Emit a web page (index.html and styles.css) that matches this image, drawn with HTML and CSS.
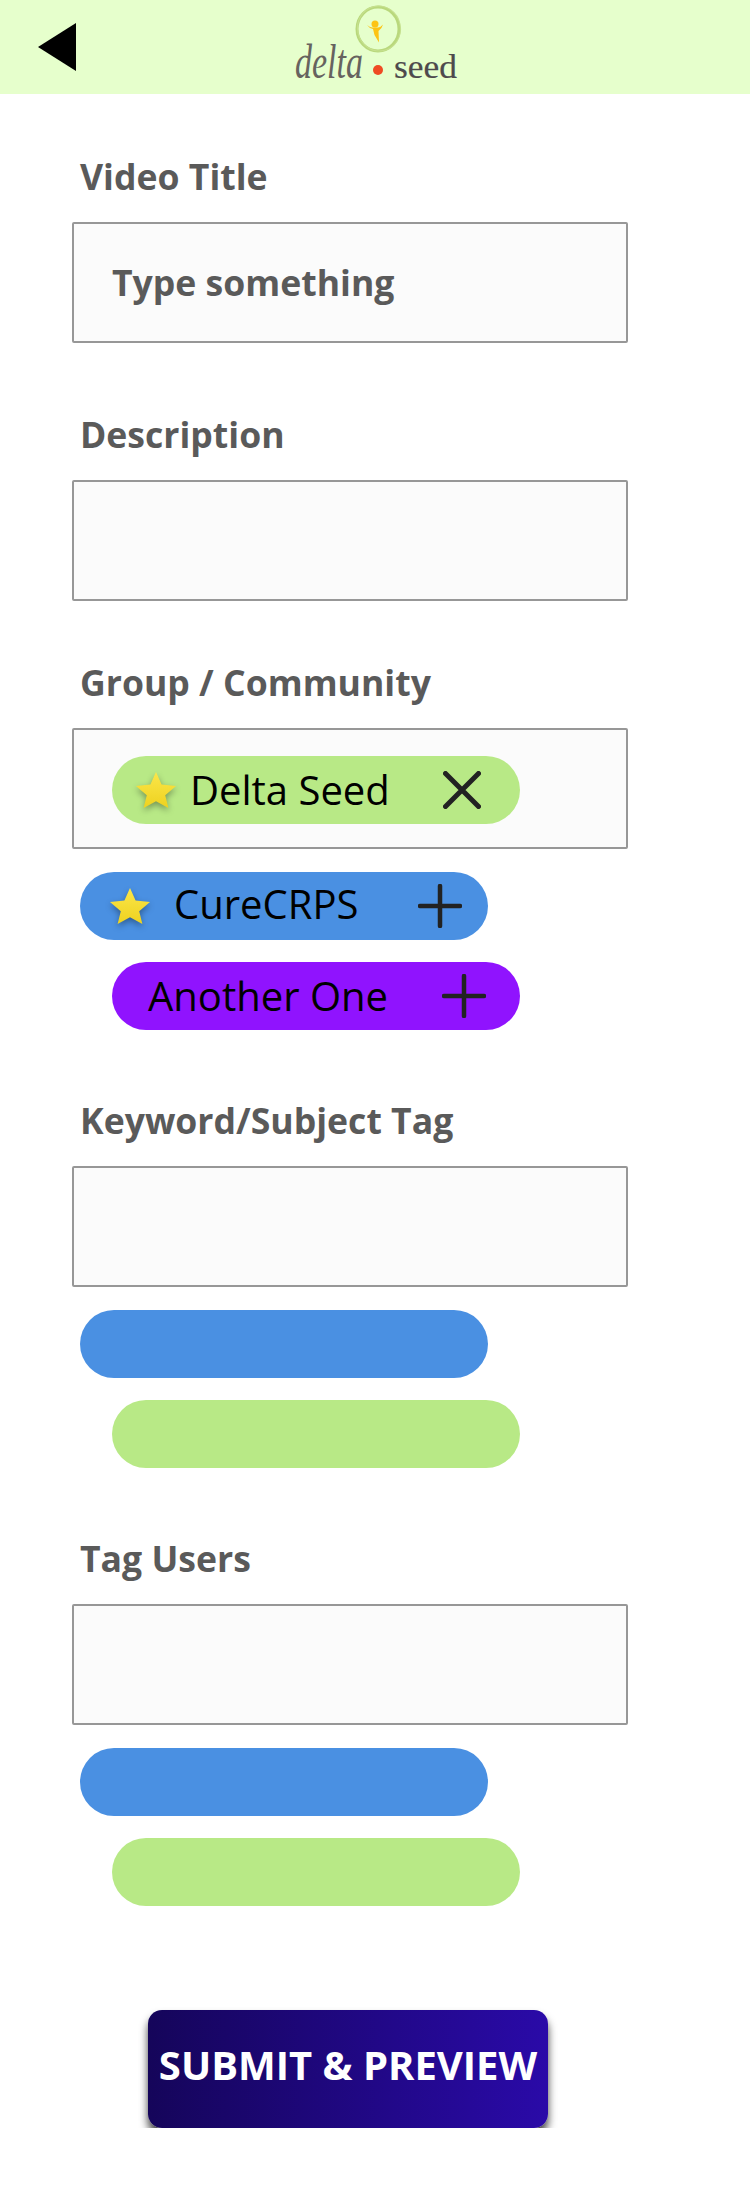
FILE: index.html
```html
<!DOCTYPE html>
<html lang="en">
  <head>
    <title>Upload Video</title>
    <link rel="stylesheet" href="styles.css">
  </head>
  <body>
    <svg class="defs" width="0" height="0">
      <defs>
        <linearGradient id="starFill" x1="0" y1="0" x2="0" y2="1">
          <stop offset="0" stop-color="#fbe64a" />
          <stop offset="1" stop-color="#eed21f" />
        </linearGradient>
        <symbol id="star" viewBox="0 0 40 36">
          <path fill="url(#starFill)" d="M20 0l5.6 12.6L40 13.9 29.200 23.200 32.400 36 20 29.300 7.600 36l3.200-12.800L0 13.900l14.400-1.300z" />
        </symbol>
        <symbol id="plus" viewBox="0 0 44 44">
          <path d="M22 2v40M2 22h40" fill="none" stroke="#222" stroke-width="4.500" stroke-linecap="round" />
        </symbol>
        <symbol id="cross" viewBox="0 0 38 38">
          <path d="M2.500 2.500l33 33M35.500 2.500l-33 33" fill="none" stroke="#222" stroke-width="5" stroke-linecap="round" />
        </symbol>
      </defs>
    </svg>

    <header class="topbar">
      <svg class="back" width="38" height="48" viewBox="0 0 38 48">
        <path d="M38 0v48L0 24z" />
      </svg>
      <svg class="logo" width="170" height="94" viewBox="0 0 170 94">
        <ellipse cx="88" cy="29" rx="21" ry="22" fill="none" stroke="#b9d87c" stroke-width="3" />
        <ellipse cx="89" cy="28.500" rx="21.500" ry="22.500" fill="none" stroke="#c6e08f" stroke-width="1" transform="rotate(-12 89 28.500)" />
        <circle cx="85" cy="24" r="3.500" fill="#fdc414" />
        <path fill="#fdc414" d="M77 25q4 3 6 2.500h5q3-.5 5-3-1 4-4.500 6.500l.5 11.500-4.500-7.500-1.500-6q-4-1-6-4z" />
        <circle cx="88" cy="70" r="5" fill="#ef4b23" />
        <text class="logo-script" x="5" y="41" transform="scale(1 1.900)" textLength="68" lengthAdjust="spacingAndGlyphs">delta</text>
        <text class="logo-seed" x="104" y="78" textLength="63" lengthAdjust="spacingAndGlyphs">seed</text>
      </svg>
    </header>

    <form class="upload-form" onsubmit="return false">
      <section class="field field-title">
        <label class="field-label">Video Title</label>
        <div class="box box-text">Type something</div>
      </section>

      <section class="field field-desc">
        <label class="field-label">Description</label>
        <div class="box"></div>
      </section>

      <section class="field field-group">
        <label class="field-label">Group / Community</label>
        <div class="box box-pill">
          <div class="pill pill-green pill-selected">
            <svg class="star" width="40" height="36"><use href="#star" /></svg>
            <span>Delta Seed</span>
            <svg class="pill-icon" width="38" height="38"><use href="#cross" /></svg>
          </div>
        </div>
        <div class="pill pill-blue pill-star">
          <svg class="star" width="40" height="36"><use href="#star" /></svg>
          <span>CureCRPS</span>
          <svg class="pill-icon" width="44" height="44"><use href="#plus" /></svg>
        </div>
        <div class="pill pill-purple pill-shift pill-plain">
          <span>Another One</span>
          <svg class="pill-icon" width="44" height="44"><use href="#plus" /></svg>
        </div>
      </section>

      <section class="field">
        <label class="field-label">Keyword/Subject Tag</label>
        <div class="box"></div>
        <div class="pill pill-blue"></div>
        <div class="pill pill-green pill-shift"></div>
      </section>

      <section class="field">
        <label class="field-label">Tag Users</label>
        <div class="box"></div>
        <div class="pill pill-blue"></div>
        <div class="pill pill-green pill-shift"></div>
      </section>

      <button type="submit" class="btn">SUBMIT &amp; PREVIEW</button>
    </form>
  </body>
</html>
```

FILE: styles.css
```css
* {
  box-sizing: border-box;
}

body {
  margin: 0;
  font-family: "Open Sans", Arial, sans-serif;
  background-color: white;
}

.defs {
  display: block;
  height: 0;
}

.topbar {
  display: flex;
  align-items: center;
  height: 94px;
  padding-left: 38px;
  background-color: #e6ffcc;
}

.logo {
  margin-left: 214px;
}

.logo-script {
  font-family: "Liberation Serif", serif;
  font-style: italic;
  font-size: 26px;
  fill: #66635f;
}

.logo-seed {
  font-family: "Liberation Serif", serif;
  font-size: 33px;
  fill: #4d4a4c;
  stroke: #4d4a4c;
  stroke-width: 0.2px;
}

.upload-form {
  padding: 0 0 0 72px;
}

.field {
  margin-top: 66px;
}

.field-title {
  margin-top: 58px;
}

.field-desc {
  margin-top: 67px;
}

.field-group {
  margin-top: 57px;
}

.field-label {
  display: block;
  height: 50px;
  margin: 0 0 20px 8px;
  font-size: 35.6px;
  font-weight: bold;
  line-height: 49px;
  color: #5a5a5a;
}

.box {
  width: 556px;
  height: 121px;
  background-color: #fbfbfb;
  border: 2px solid #979797;
  border-radius: 2px;
}

.box-text {
  padding: 0 0 0 38px;
  font-size: 35.6px;
  font-weight: bold;
  line-height: 116px;
  color: #5a5a5a;
}

.box-pill {
  padding: 26px 0 0 38px;
}

.pill {
  display: flex;
  align-items: center;
  width: 408px;
  height: 68px;
  margin: 23px 0 0 8px;
  border-radius: 34px;
  font-size: 40px;
  color: black;
}

.pill + .pill {
  margin-top: 22px;
}

.pill-shift {
  margin-left: 40px;
}

.pill-green {
  background-color: #b8e986;
}

.pill-blue {
  background-color: #4a90e2;
}

.pill-purple {
  background-color: #9013fe;
}

.pill-selected {
  margin: 0;
  padding: 0 39px 0 24px;
  gap: 14px;
}

.pill-selected span,
.pill-plain span {
  margin-bottom: 2px;
}

.pill-star {
  padding: 0 26px 0 30px;
  gap: 24px;
}

.pill-star span {
  margin-bottom: 6px;
}

.pill-plain {
  padding: 0 34px 0 36px;
}

.pill-icon {
  margin-left: auto;
}

.star {
  filter: drop-shadow(0 3px 3px rgba(0, 0, 0, 0.35));
}

.btn {
  display: block;
  width: 400px;
  height: 118px;
  margin: 104px 0 0 76px;
  padding: 0 0 10px;
  border: none;
  border-radius: 14px;
  background: linear-gradient(90deg, #15055a, #2a0aa8);
  box-shadow: 0 7px 9px rgba(0, 0, 0, 0.75);
  font-family: "Open Sans", Arial, sans-serif;
  font-size: 40px;
  font-weight: bold;
  white-space: nowrap;
  color: white;
}
```
